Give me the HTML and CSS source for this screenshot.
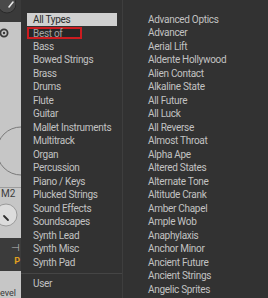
FILE: index.html
```html
<!DOCTYPE html>
<html>
<head>
<meta charset="utf-8">
<title>Preset Types</title>
<link rel="stylesheet" href="styles.css">
</head>
<body>

<div class="screen">

	<!-- the instrument panel behind the menu -->
	<div class="backdrop">
		<div class="bd-top">
			<svg class="knob-dark" width="16" height="14" viewBox="0 0 16 14">
				<circle cx="7" cy="4" r="9" fill="#4a4a4a" stroke="#2a2a2a" stroke-width="1"/>
				<line x1="9" y1="7" x2="13" y2="2" stroke="#e8e8e8" stroke-width="1.6" stroke-linecap="round"/>
			</svg>
		</div>
		<div class="bd-panel">
			<svg class="bd-gear" width="10" height="10" viewBox="0 0 10 10">
				<circle cx="4" cy="5" r="3.6" fill="none" stroke="#3a3a3a" stroke-width="1.8"/>
				<circle cx="4" cy="5" r="1.2" fill="#3a3a3a"/>
			</svg>
			<svg class="bd-ring" width="21" height="50" viewBox="0 0 21 50">
				<path d="M21 1 A24 24 0 0 0 21 49" fill="none" stroke="#7a7a7a" stroke-width="1"/>
			</svg>
			<div class="bd-label">M2</div>
			<svg class="knob-light" width="21" height="24" viewBox="0 0 21 24">
				<circle cx="6" cy="12" r="11" fill="#dcdcdc" stroke="#9a9a9a" stroke-width="1"/>
				<line x1="4" y1="13" x2="8" y2="17" stroke="#2e2e2e" stroke-width="1.8" stroke-linecap="round"/>
			</svg>
		</div>
		<div class="bd-band">
			<span class="bd-route">&#x22A3;</span>
			<span class="bd-p">P</span>
		</div>
		<div class="bd-foot">
			<span>evel</span>
		</div>
	</div>

	<!-- the preset type menu -->
	<div class="menu">
		<ul class="types">
			<li class="selected">All Types</li>
			<li><span class="marked">Best of</span></li>
			<li>Bass</li>
			<li>Bowed Strings</li>
			<li>Brass</li>
			<li>Drums</li>
			<li>Flute</li>
			<li>Guitar</li>
			<li>Mallet Instruments</li>
			<li>Multitrack</li>
			<li>Organ</li>
			<li>Percussion</li>
			<li>Piano / Keys</li>
			<li>Plucked Strings</li>
			<li>Sound Effects</li>
			<li>Soundscapes</li>
			<li>Synth Lead</li>
			<li>Synth Misc</li>
			<li>Synth Pad</li>
			<li class="user">User</li>
		</ul>
		<ul class="presets">
			<li>Advanced Optics</li>
			<li>Advancer</li>
			<li>Aerial Lift</li>
			<li>Aldente Hollywood</li>
			<li>Alien Contact</li>
			<li>Alkaline State</li>
			<li>All Future</li>
			<li>All Luck</li>
			<li>All Reverse</li>
			<li>Almost Throat</li>
			<li>Alpha Ape</li>
			<li>Altered States</li>
			<li>Alternate Tone</li>
			<li>Altitude Crank</li>
			<li>Amber Chapel</li>
			<li>Ample Wob</li>
			<li>Anaphylaxis</li>
			<li>Anchor Minor</li>
			<li>Ancient Future</li>
			<li>Ancient Strings</li>
			<li>Angelic Sprites</li>
		</ul>
	</div>

</div>

</body>
</html>
```

FILE: styles.css
```css
html, body {
	margin: 0;
	padding: 0;
}

body {
	width: 268px;
	height: 298px;
	overflow: hidden;
	font-family: Roboto, "Liberation Sans", sans-serif;
	background: #323232;
}

.screen {
	display: flex;
	height: 298px;
}

/* backdrop panel */

.backdrop {
	width: 21px;
	flex: none;
	display: flex;
	flex-direction: column;
	overflow: hidden;
}

.bd-top {
	height: 22px;
	background: #3a3a3a;
	overflow: hidden;
}

.knob-dark {
	display: block;
}

.bd-panel {
	height: 216px;
	background: #c6c6c6;
	display: flex;
	flex-direction: column;
	overflow: hidden;
}

.bd-gear {
	display: block;
	margin: 6px 0 0 0;
}

.bd-ring {
	display: block;
	margin: 88px 0 0 0;
}

.bd-label {
	margin-top: 11px;
	padding-left: 1px;
	height: 11px;
	font-size: 10px;
	line-height: 11px;
	color: #3c3c3c;
	border-top: 1px solid #9c9c9c;
}

.knob-light {
	display: block;
	margin-top: 4px;
}

.bd-band {
	height: 33px;
	background: #3b3b3b;
	display: flex;
	flex-direction: column;
	align-items: flex-end;
	padding-right: 1px;
	box-sizing: border-box;
}

.bd-route {
	margin-top: 4px;
	font-size: 10px;
	line-height: 12px;
	color: #bdbdbd;
}

.bd-p {
	margin-top: 2px;
	font-size: 9px;
	font-weight: bold;
	line-height: 10px;
	color: #e0a020;
}

.bd-foot {
	flex: 1;
	background: #c6c6c6;
	display: flex;
	align-items: flex-end;
	font-size: 9px;
	line-height: 9px;
	color: #3a3a3a;
}

/* menu */

.menu {
	flex: 1;
	display: flex;
	background: #323232;
	color: #c2c2c2;
	font-size: 10px;
	letter-spacing: -0.3px;
}

.menu ul {
	list-style: none;
	margin: 0;
	padding: 12.5px 0 0 0;
}

.menu li {
	height: 13.5px;
	line-height: 13.5px;
	white-space: nowrap;
}

.types {
	width: 101px;
	border-right: 1px solid #3e3e3e;
}

.types li {
	margin: 0 5px 0 6px;
	padding-left: 6px;
}

.types li.selected {
	background: #d0d0d0;
	color: #2c2c2c;
}

.types li .marked {
	display: inline-block;
	box-sizing: border-box;
	width: 55px;
	height: 12px;
	margin: 1px 0 0 -6px;
	padding-left: 4px;
	line-height: 9px;
	border: 2px solid #cc1c20;
	background: #272727;
	color: #a4a4a4;
	vertical-align: top;
}

.types li.user {
	margin-top: 4px;
	margin-left: 0;
	margin-right: 0;
	padding-left: 12px;
	padding-top: 3px;
	border-top: 1px solid #454545;
}

.presets {
	padding-left: 25px !important;
}
```
